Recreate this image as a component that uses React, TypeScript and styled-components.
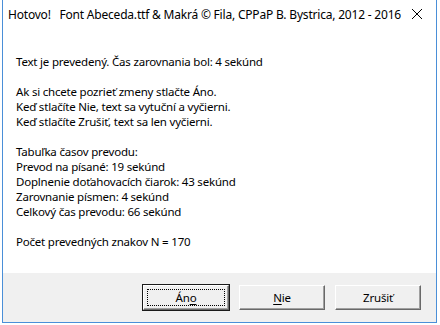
import React from "react";
import styled, { createGlobalStyle } from "styled-components";

const Global = createGlobalStyle`
  html, body { margin: 0; padding: 0; background: #ffffff; }
  body { font-family: "Segoe UI", "Noto Sans", "Liberation Sans", sans-serif; }
`;

const Screen = styled.div`
  width: 440px;
  height: 325px;
  display: flex;
  padding-left: 2px;
  box-sizing: border-box;
  overflow: hidden;
`;

const Window = styled.div`
  width: 435px;
  height: 323px;
  box-sizing: border-box;
  border: 1px solid #4a8fd8;
  border-top: none;
  display: flex;
  flex-direction: column;
  background: #ffffff;
`;

const TitleBar = styled.div`
  height: 28px;
  display: flex;
  align-items: center;
  padding-left: 5px;
  padding-right: 10px;
  font-size: 12px;
  letter-spacing: -0.2px;
  color: #000;
  white-space: pre;
`;

const TitleText = styled.span`
  flex: 1;
`;

const Close = styled.span`
  width: 14px;
  height: 14px;
  display: flex;
  margin-right: 2px;
`;

const Content = styled.div`
  flex: 1;
  padding: 26px 0 0 13px;
  font-size: 11.5px;
  letter-spacing: -0.2px;
  line-height: 15px;
  color: #000;
`;

const Line = styled.div<{ $gap?: boolean }>`
  height: 15px;
  white-space: pre;
  margin-top: ${(p) => (p.$gap ? "15px" : "0")};
`;

const Footer = styled.div`
  height: 49px;
  background: #f0f0f0;
  display: flex;
  justify-content: flex-end;
  align-items: flex-start;
  padding: 12px 15px 0 0;
  gap: 10px;
  box-sizing: border-box;
`;

const Button = styled.button<{ $def?: boolean }>`
  width: 86px;
  height: 25px;
  box-sizing: border-box;
  padding: 0;
  font-family: inherit;
  font-size: 11.5px;
  letter-spacing: -0.2px;
  color: #000;
  background: #f0f0f0;
  border-style: solid;
  border-width: 1px;
  border-color: #ffffff #696969 #696969 #ffffff;
  box-shadow: inset -1px -1px 0 #a0a0a0;
  position: relative;
  display: flex;
  align-items: center;
  justify-content: center;
  ${(p) =>
    p.$def &&
    `
    outline: 1px solid #1a1a1a;
    outline-offset: 0;
    &::after {
      content: "";
      position: absolute;
      left: 3px; top: 3px; right: 3px; bottom: 3px;
      border: 1px dotted #000;
    }
  `}
`;

const U = styled.span`
  text-decoration: underline;
  text-underline-offset: 2px;
`;

export default function App() {
  return (
    <>
      <Global />
      <Screen>
        <Window>
          <TitleBar>
            <TitleText>{"Hotovo!   Font Abeceda.ttf & Makrá © Fila, CPPaP B. Bystrica, 2012 - 2016"}</TitleText>
            <Close>
              <svg width="14" height="14" viewBox="0 0 14 14">
                <path d="M2 2 L12 12 M12 2 L2 12" stroke="#000" strokeWidth="1" />
              </svg>
            </Close>
          </TitleBar>
          <Content>
            <Line>Text je prevedený. Čas zarovnania bol: 4 sekúnd</Line>
            <Line $gap>Ak si chcete pozrieť zmeny stlačte Áno.</Line>
            <Line>Keď stlačíte Nie, text sa vytuční a vyčierni.</Line>
            <Line>Keď stlačíte Zrušiť, text sa len vyčierni.</Line>
            <Line $gap>Tabuľka časov prevodu:</Line>
            <Line>Prevod na písané: 19 sekúnd</Line>
            <Line>Doplnenie doťahovacích čiarok: 43 sekúnd</Line>
            <Line>Zarovnanie písmen: 4 sekúnd</Line>
            <Line>Celkový čas prevodu: 66 sekúnd</Line>
            <Line $gap>Počet prevedných znakov N = 170</Line>
          </Content>
          <Footer>
            <Button $def>
              Án<U>o</U>
            </Button>
            <Button>
              <U>N</U>ie
            </Button>
            <Button>Zrušiť</Button>
          </Footer>
        </Window>
      </Screen>
    </>
  );
}
